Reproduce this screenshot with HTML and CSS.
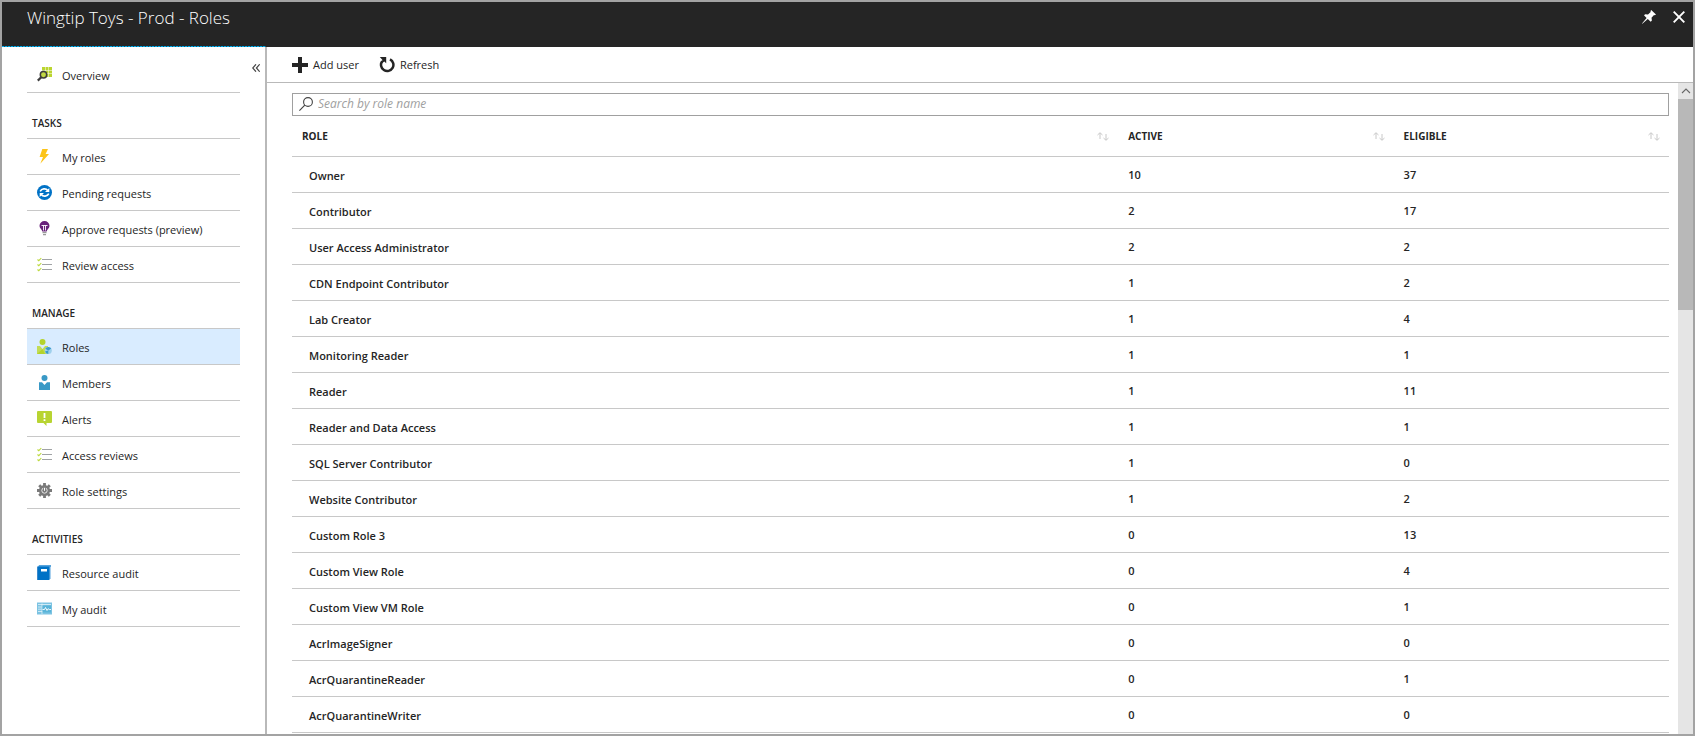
FILE: index.html
```html
<!DOCTYPE html>
<html lang="en">
<head>
<meta charset="utf-8">
<title>Wingtip Toys - Prod - Roles</title>
<link rel="stylesheet" href="styles.css">
</head>
<body>
<svg class="sprite" aria-hidden="true">
  <symbol id="i-checks" viewBox="0 0 15 15">
    <path d="M5 2.500h10M5 7.500h10M5 12.500h10" stroke="#a0a3a5" stroke-width="1.200"/>
    <path d="M.5 2.500l1.300 1.200L4.300 1M.5 7.500l1.300 1.200L4.300 6M.5 12.500l1.300 1.200L4.300 11" stroke="#bbd93c" stroke-width="1.100" fill="none"/>
  </symbol>
  <symbol id="i-sort" viewBox="0 0 12 9">
    <path d="M3 7V1M.5 3L3 .7 5.500 3M9 2v6M6.500 6L9 8.300 11.500 6" stroke="#c8c8c8" fill="none"/>
  </symbol>
</svg>
<div class="blade">
  <header class="titlebar">
    <h1>Wingtip Toys - Prod - Roles</h1>
    <div class="window-actions">
      <button type="button" aria-label="Pin">
        <svg width="14" height="14" viewBox="0 0 14 14"><path d="M9.200 0L14 4.600l-1.200.7-.8-.2-2.500 2.600.4 2.900-1.200 1.100L5.800 9 .3 13.800l-.3-.3L4.600 7.900 2 5.300l1.200-1 2.800.3 2.700-2.500-.2-1z" fill="#fff"/></svg>
      </button>
      <button type="button" aria-label="Close">
        <svg width="12" height="12" viewBox="0 0 12 12"><path d="M.7.7l10.600 10.600M11.300.7L.7 11.300" stroke="#fff" stroke-width="1.900"/></svg>
      </button>
    </div>
  </header>
  <div class="main">
    <nav class="sidebar" aria-label="Resource menu">
      <button type="button" class="collapse" aria-label="Collapse menu">
        <svg width="8" height="8" viewBox="0 0 8 8"><path d="M4 .3L.7 4 4 7.700M7.700.3L4.400 4l3.300 3.700" stroke="#444" stroke-width="1.200" fill="none"/></svg>
      </button>
      <ul class="menu">
        <li><a href="#overview"><svg class="icon" viewBox="0 0 15 15"><path d="M5 0h3v3H5zM8.500 0h3v3h-3zM12 0h3v3h-3zM8.500 3.500h3v3h-3zM12 3.500h3v3h-3zM12 7h3v3h-3zM8.500 7h3v3h-3zM5 3.500h3v3H5z" fill="#bbd530"/><circle cx="6.500" cy="7.700" r="3.200" fill="#c3da45" stroke="#3e3e3e" stroke-width="1.500"/><path d="M4.200 10.200L.8 13.600" stroke="#3e3e3e" stroke-width="2.200"/></svg><span>Overview</span></a></li>
      </ul>
      <h2>Tasks</h2>
      <ul class="menu">
        <li><a href="#my-roles"><svg class="icon" viewBox="0 0 15 15"><path d="M5.300 0H11L8.600 5H12L3.300 14.700 6 8H2.600z" fill="#fcc419"/></svg><span>My roles</span></a></li>
        <li><a href="#pending"><svg class="icon" viewBox="0 0 15 15"><circle cx="7.500" cy="7.500" r="7.500" fill="#0072c6"/><path d="M3.200 6.300C4.500 3.500 9 3 10.700 5.500M11.800 8.700C10.500 11.500 6 12 4.300 9.500" stroke="#fff" stroke-width="1.600" fill="none"/><path d="M12.300 3v4H8zM2.700 12V8H7z" fill="#fff"/></svg><span>Pending requests</span></a></li>
        <li><a href="#approve"><svg class="icon" viewBox="0 0 15 15"><path d="M7.500 0a5 5 0 0 0-5 5c0 2.400 2.500 3.400 2.800 5.500h4.400C10 8.400 12.500 7.400 12.500 5a5 5 0 0 0-5-5z" fill="#68217a"/><path d="M6.500 9.500V4.500M8.500 9.500V4.500M4.500 4.500h6" stroke="#fff" stroke-width=".9" fill="none"/><path d="M5.500 11.700h4M6 13.700h3" stroke="#9a9a9a" stroke-width="1.200"/></svg><span>Approve requests (preview)</span></a></li>
        <li><a href="#review"><svg class="icon"><use href="#i-checks"/></svg><span>Review access</span></a></li>
      </ul>
      <h2>Manage</h2>
      <ul class="menu">
        <li><a href="#roles" class="current" aria-current="page"><svg class="icon" viewBox="0 0 15 15"><circle cx="5.500" cy="3" r="3" fill="#b4d32c"/><path d="M0 7h3l2.500 3L8 7h3v8H0z" fill="#c2dc55"/><path d="M0 15l5.500-5L8 15z" fill="#b4d32c"/><circle cx="11.300" cy="11.500" r="3.500" fill="#9fd0ec"/><path d="M11.300 11.500L8.300 9.700a3.500 3.500 0 0 1 6-.1zM11.300 11.500V15a3.500 3.500 0 0 1-3.300-2.500z" fill="#3a99cb"/></svg><span>Roles</span></a></li>
        <li><a href="#members"><svg class="icon" viewBox="0 0 15 15"><circle cx="7.500" cy="3" r="3" fill="#3999c6"/><path d="M2 7.200h3L7.500 10 10 7.200h3V15H2z" fill="#3999c6"/></svg><span>Members</span></a></li>
        <li><a href="#alerts"><svg class="icon" viewBox="0 0 15 15"><path d="M1 0h13q1 0 1 1v10q0 1-1 1H9.500v3L6.500 12H1q-1 0-1-1V1q0-1 1-1z" fill="#b8d432"/><path d="M7.500 2v5M7.500 8.300v1.800" stroke="#fff" stroke-width="1.800"/></svg><span>Alerts</span></a></li>
        <li><a href="#access-reviews"><svg class="icon"><use href="#i-checks"/></svg><span>Access reviews</span></a></li>
        <li><a href="#settings"><svg class="icon" viewBox="0 0 15 15"><path d="M7.500 0v15M0 7.500h15M2.200 2.200l10.600 10.600M12.800 2.200L2.200 12.800" stroke="#7a7a7a" stroke-width="2.800"/><circle cx="7.500" cy="7.500" r="5.500" fill="#7a7a7a"/><circle cx="7.500" cy="7.500" r="2.700" fill="none" stroke="#e8e8e8" stroke-width="1"/><path d="M7.500 4v4" stroke="#7a7a7a" stroke-width="2.600"/><path d="M7.500 4.800v3" stroke="#fff" stroke-width="1"/></svg><span>Role settings</span></a></li>
      </ul>
      <h2>Activities</h2>
      <ul class="menu">
        <li><a href="#resource-audit"><svg class="icon" viewBox="0 0 15 15"><path d="M2 0h12v14h-2V2H1z" fill="#59a4dc"/><path d="M12.500 2H14v12h-1.500z" fill="#a9d0ee"/><path d="M0 1.500h1V15H0z" fill="#3989cc"/><path d="M1 1.500h11.500V15H1z" fill="#0072c6"/><path d="M4 4h6v2.500H4z" fill="#fff"/></svg><span>Resource audit</span></a></li>
        <li><a href="#my-audit"><svg class="icon" viewBox="0 0 15 15"><path d="M0 1.500h15v12H0z" fill="#7cc3e2"/><path d="M1 3.500h13M1 6h3.500M1 8.200h3.500M1 10.500h13M5 2.500v10.500" stroke="#e2f3fa" stroke-width=".8"/><path d="M5.500 4.500H14v7H5.500z" fill="#59b4d9"/><path d="M5.500 8.500h2l1-2 1.500 3 1.200-1.800 1 .8H14" stroke="#fff" stroke-width=".9" fill="none"/></svg><span>My audit</span></a></li>
      </ul>
    </nav>
    <main class="content">
      <div class="toolbar">
        <button type="button"><svg width="16" height="16" viewBox="0 0 16 16"><path d="M8 0v16M0 8h16" stroke="#252525" stroke-width="4"/></svg>Add user</button>
        <button type="button"><svg width="16" height="16" viewBox="0 0 16 16"><path d="M11 2.300A6.200 6.200 0 1 1 3.200 4.200" stroke="#252525" stroke-width="2.500" fill="none"/><path d="M.8 0h6.400v6.200L5.300 4.500 3 6.200 2 5l1.500-2z" fill="#252525"/></svg>Refresh</button>
      </div>
      <div class="scroll-area">
        <div class="list">
          <label class="search">
            <svg width="14" height="14" viewBox="0 0 14 14"><circle cx="9" cy="5" r="4.400" stroke="#444" stroke-width="1.100" fill="none"/><path d="M5.800 8.200L.4 13.600" stroke="#444" stroke-width="1.200"/></svg>
            <input type="search" placeholder="Search by role name" aria-label="Search by role name">
          </label>
          <table class="roles">
            <thead>
              <tr>
                <th class="col-role" scope="col"><button type="button">Role<svg class="sort"><use href="#i-sort"/></svg></button></th>
                <th scope="col"><button type="button">Active<svg class="sort"><use href="#i-sort"/></svg></button></th>
                <th scope="col"><button type="button">Eligible<svg class="sort"><use href="#i-sort"/></svg></button></th>
              </tr>
            </thead>
            <tbody>
              <tr><td>Owner</td><td>10</td><td>37</td></tr>
              <tr><td>Contributor</td><td>2</td><td>17</td></tr>
              <tr><td>User Access Administrator</td><td>2</td><td>2</td></tr>
              <tr><td>CDN Endpoint Contributor</td><td>1</td><td>2</td></tr>
              <tr><td>Lab Creator</td><td>1</td><td>4</td></tr>
              <tr><td>Monitoring Reader</td><td>1</td><td>1</td></tr>
              <tr><td>Reader</td><td>1</td><td>11</td></tr>
              <tr><td>Reader and Data Access</td><td>1</td><td>1</td></tr>
              <tr><td>SQL Server Contributor</td><td>1</td><td>0</td></tr>
              <tr><td>Website Contributor</td><td>1</td><td>2</td></tr>
              <tr><td>Custom Role 3</td><td>0</td><td>13</td></tr>
              <tr><td>Custom View Role</td><td>0</td><td>4</td></tr>
              <tr><td>Custom View VM Role</td><td>0</td><td>1</td></tr>
              <tr><td>AcrImageSigner</td><td>0</td><td>0</td></tr>
              <tr><td>AcrQuarantineReader</td><td>0</td><td>1</td></tr>
              <tr><td>AcrQuarantineWriter</td><td>0</td><td>0</td></tr>
            </tbody>
          </table>
        </div>
        <div class="scrollbar" aria-hidden="true">
          <svg class="scroll-up" viewBox="0 0 15 16"><path d="M4 10l4-4 4 4" stroke="#666" stroke-width="1.100" fill="none"/></svg>
          <div class="thumb"></div>
        </div>
      </div>
    </main>
  </div>
</div>
</body>
</html>
```
FILE: styles.css
```css
* { box-sizing: border-box; }

body {
  margin: 0;
  font: 11px/16px "Segoe UI", "Open Sans", "Noto Sans", sans-serif;
  color: #252525;
  background: #fff;
}

button {
  font: inherit;
  color: inherit;
  background: none;
  border: 0;
  padding: 0;
}

.sprite {
  position: absolute;
  width: 0;
  height: 0;
}

.blade {
  display: flex;
  flex-direction: column;
  height: 100vh;
  border: 2px solid #a3a3a3;
  overflow: hidden;
}

.titlebar {
  position: relative;
  display: flex;
  flex: none;
  justify-content: space-between;
  align-items: flex-start;
  height: 45px;
  padding: 4px 8px 0 25px;
  background: #252525;
  color: #fff;
}

.titlebar::after {
  content: "";
  position: absolute;
  left: 0;
  bottom: 0;
  width: 264px;
  height: 1px;
  background: repeating-linear-gradient(90deg, #00abec 0 2px, #17566d 2px 3px);
}

.titlebar h1 {
  margin: 0;
  font-size: 17px;
  line-height: 24px;
  font-weight: 300;
}

.window-actions {
  display: flex;
  align-items: center;
  gap: 17px;
  height: 22px;
}

.window-actions svg { display: block; }

.main {
  display: flex;
  flex: 1;
  min-height: 0;
}

.sidebar {
  position: relative;
  flex: none;
  width: 265px;
  padding: 10px 25px 0;
  border-right: 2px solid #b9b9b9;
}

.collapse {
  position: absolute;
  top: 17px;
  right: 5px;
}

.collapse svg { display: block; }

.menu {
  list-style: none;
  margin: 0;
  padding: 0;
}

.menu a {
  display: flex;
  align-items: center;
  gap: 10px;
  height: 36px;
  padding: 0 10px;
  border-bottom: 1px solid #c8c8c8;
  color: inherit;
  text-decoration: none;
}

.menu span { padding-top: 2px; }

.menu .current { background: #d9ecff; }

.icon {
  flex: none;
  width: 15px;
  height: 15px;
}

.sidebar h2 {
  margin: 0;
  padding: 22px 5px 7px;
  border-bottom: 1px solid #c8c8c8;
  font-size: 10px;
  line-height: 16px;
  font-weight: 600;
  text-transform: uppercase;
}

.content {
  display: flex;
  flex-direction: column;
  flex: 1;
  min-width: 0;
}

.toolbar {
  display: flex;
  flex: none;
  align-items: center;
  gap: 20px;
  height: 36px;
  padding: 0 25px;
  border-bottom: 1px solid #b9b9b9;
}

.toolbar button {
  display: flex;
  align-items: center;
  gap: 5px;
}

.scroll-area {
  display: flex;
  flex: 1;
  min-height: 0;
  overflow: hidden;
}

.list {
  flex: 1;
  padding: 10px 9px 0 25px;
}

.search {
  display: flex;
  align-items: center;
  gap: 5px;
  height: 23px;
  padding: 0 6px 1px;
  border: 1px solid #a0a0a0;
}

.search input {
  flex: 1;
  border: 0;
  padding: 0;
  outline: 0;
  font: inherit;
  font-size: 12px;
  background: none;
}

.search input::placeholder {
  color: #a0a0a0;
  font-style: italic;
}

.roles {
  width: 100%;
  table-layout: fixed;
  border-collapse: separate;
  border-spacing: 0;
  font-weight: 600;
}

.roles th {
  width: 20%;
  height: 41px;
  padding: 0 9px 0 10px;
  border-bottom: 1px solid #c8c8c8;
}

.roles .col-role { width: 60%; }

.roles th button {
  display: flex;
  justify-content: space-between;
  align-items: center;
  width: 100%;
  font-size: 10px;
  font-weight: 700;
  text-transform: uppercase;
}

.sort {
  width: 12px;
  height: 9px;
}

.roles td {
  height: 36px;
  padding: 0 10px;
  border-bottom: 1px solid #c8c8c8;
}

.roles td:first-child { padding: 2px 17px 0; }

.scrollbar {
  flex: none;
  width: 15px;
  background: #e5e5e5;
}

.scroll-up {
  display: block;
  width: 15px;
  height: 16px;
}

.thumb {
  height: 32.4%;
  background: #b8b8b8;
}
```
